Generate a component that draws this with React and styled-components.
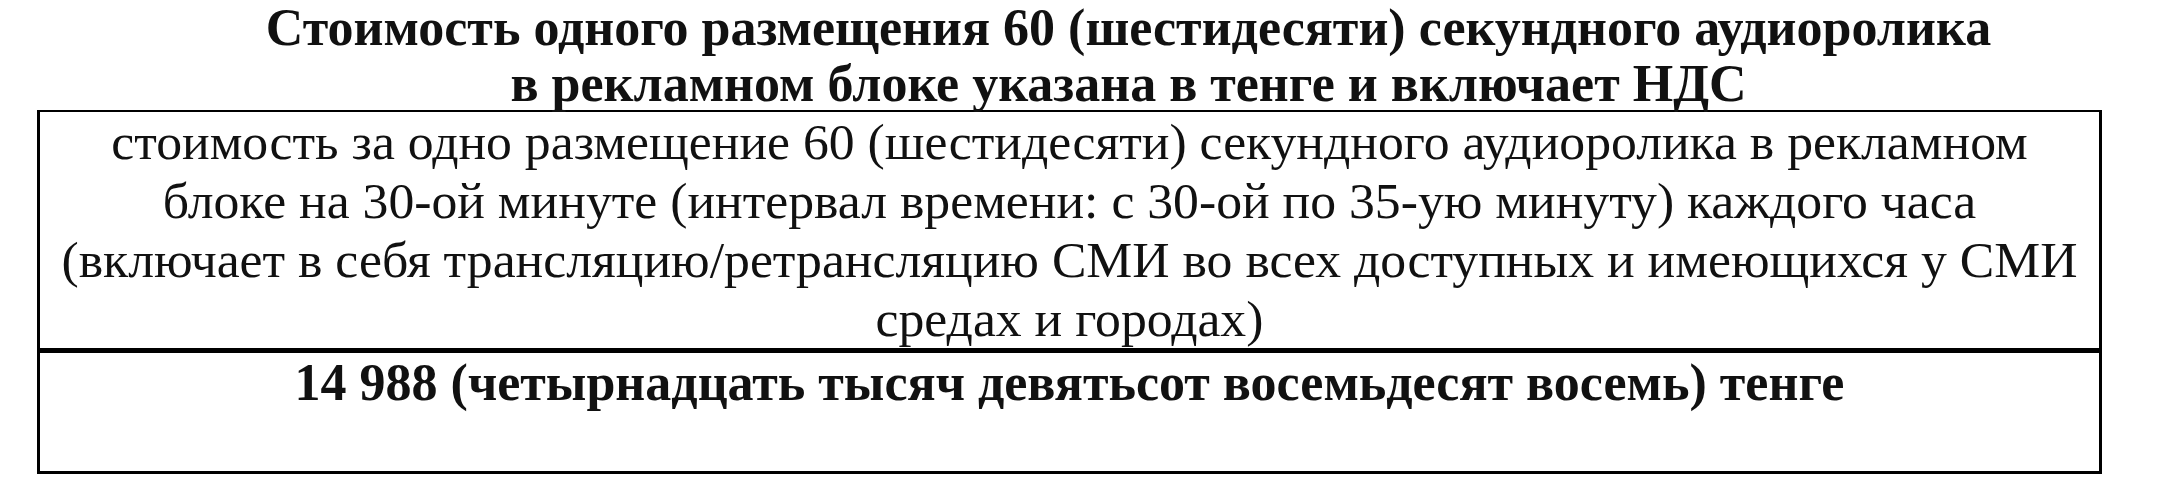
import React from "react";
import styled, { createGlobalStyle } from "styled-components";

const GlobalStyle = createGlobalStyle`
  html, body {
    margin: 0;
    padding: 0;
    background: #ffffff;
  }
  body {
    font-family: "Liberation Serif", "Times New Roman", serif;
    color: #111111;
  }
`;

const Page = styled.div`
  width: 2160px;
  height: 481px;
  box-sizing: border-box;
  padding: 0 58px 0 37px;
  overflow: hidden;
`;

const Heading = styled.h1`
  margin: 0;
  padding-left: 118px;
  font-size: 52px;
  font-weight: 700;
  line-height: 56px;
  text-align: center;
  height: 110px;
`;

const PriceTable = styled.div`
  display: flex;
  flex-direction: column;
  border: 3px solid #000;
  border-top-width: 2px;
`;

const Cell = styled.div`
  font-size: ${(p) => p.$size || 51.7}px;
  font-weight: ${(p) => (p.$bold ? 700 : 400)};
  line-height: 59px;
  text-align: center;
  white-space: nowrap;
  min-height: ${(p) => p.$minHeight || 0}px;
  border-bottom: ${(p) => (p.$divider ? "5px solid #000" : "none")};
`;

export default function App() {
  return (
    <>
      <GlobalStyle />
      <Page>
        <Heading>
          Стоимость одного размещения 60 (шестидесяти) секундного аудиоролика
          <br />в рекламном блоке указана в тенге и включает НДС
        </Heading>
        <PriceTable>
          <Cell $divider>
            стоимость за одно размещение 60 (шестидесяти) секундного аудиоролика в рекламном
            <br />
            блоке на 30-ой минуте (интервал времени: с 30-ой по 35-ую минуту) каждого часа
            <br />
            (включает в себя трансляцию/ретрансляцию СМИ во всех доступных и имеющихся у СМИ
            <br />
            средах и городах)
          </Cell>
          <Cell $bold $size={52} $minHeight={118}>
            14 988 (четырнадцать тысяч девятьсот восемьдесят восемь) тенге
          </Cell>
        </PriceTable>
      </Page>
    </>
  );
}
